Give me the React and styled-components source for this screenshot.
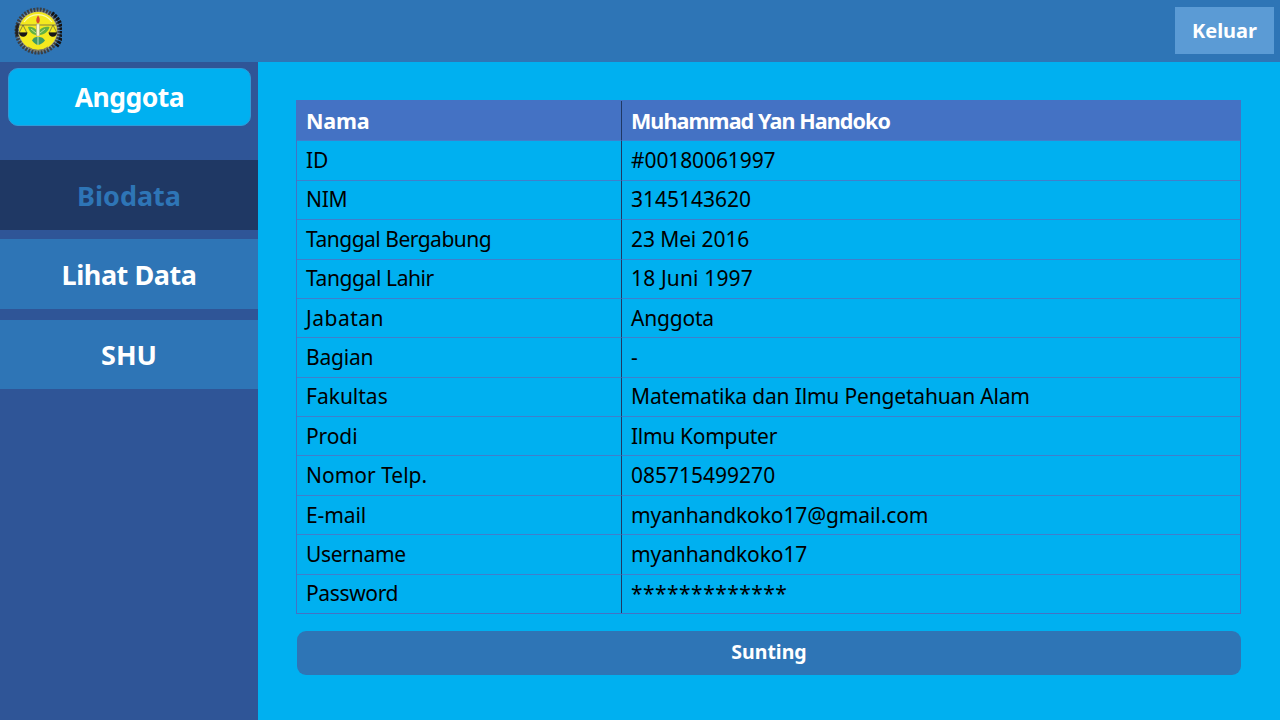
import React from 'react';
import styled, { createGlobalStyle } from 'styled-components';

const GlobalStyle = createGlobalStyle`
  html, body { margin: 0; padding: 0; }
  body { font-family: 'Noto Sans', 'Open Sans', sans-serif; background: #00b0f0; }
`;

const Page = styled.div`
  width: 1280px;
  height: 720px;
  display: flex;
  flex-direction: column;
  overflow: hidden;
`;

const TopBar = styled.header`
  height: 62px;
  flex: none;
  background: #2e75b6;
  display: flex;
  justify-content: space-between;
  align-items: flex-start;
  padding: 7px 6px 0 14px;
  box-sizing: border-box;
`;

const LogoutButton = styled.button`
  width: 99px;
  height: 47px;
  border: none;
  background: #5b9bd5;
  color: #fff;
  font: 700 20px 'Noto Sans', sans-serif;
  padding: 0 0 1px;
`;

const Body = styled.div`
  flex: 1;
  display: flex;
  min-height: 0;
`;

const Sidebar = styled.nav`
  width: 258px;
  flex: none;
  background: #2f5597;
  display: flex;
  flex-direction: column;
  padding-top: 6px;
  box-sizing: border-box;
`;

const RoleBadge = styled.div`
  height: 58px;
  margin: 0 7px 34px 8px;
  border-radius: 10px;
  border: 1px solid #2e9bd8;
  box-sizing: border-box;
  background: #00b0f0;
  color: #fff;
  font-size: 26.5px;
  letter-spacing: -0.5px;
  font-weight: 700;
  display: flex;
  align-items: center;
  justify-content: center;
`;

const NavItem = styled.div`
  height: ${p => p.$h}px;
  margin-bottom: ${p => p.$gap}px;
  background: ${p => (p.$active ? '#1f3864' : '#2e75b6')};
  color: ${p => (p.$active ? '#2e75b6' : '#fff')};
  font-size: 27px;
  letter-spacing: ${p => (p.$tight ? '-0.45px' : '0')};
  font-weight: 700;
  display: flex;
  align-items: center;
  justify-content: center;
`;

const Main = styled.main`
  flex: 1;
  background: #00b0f0;
  padding: 38px 39px 0 38px;
  display: flex;
  flex-direction: column;
`;

const Table = styled.div`
  display: grid;
  grid-template-columns: 324px 1fr;
  grid-template-rows: repeat(13, 1fr);
  height: 514px;
  border: 1px solid #4472c4;
  box-sizing: border-box;
`;

const Cell = styled.div`
  display: flex;
  align-items: center;
  padding: 0 0 1px 9px;
  box-sizing: border-box;
  font-size: ${p => (p.$head ? 21.5 : 21)}px;
  white-space: nowrap;
  color: ${p => (p.$head ? '#fff' : '#000')};
  font-weight: ${p => (p.$head ? 700 : 400)};
  letter-spacing: ${p => p.$track || 0}px;
  background: ${p => (p.$head ? '#4472c4' : 'transparent')};
  border-top: ${p => (p.$head ? 'none' : '1px solid #3f7fcc')};
  border-left: ${p => (p.$right ? '1px solid #1f3864' : 'none')};
`;

const EditButton = styled.button`
  margin: 17px 0 0 1px;
  height: 44px;
  border: none;
  border-radius: 9px;
  background: #2e75b6;
  color: #fff;
  font: 700 19.5px 'Noto Sans', sans-serif;
  padding: 0 0 3px;
`;

// label, label tracking, value, value tracking
const rows = [
  ['ID', 0, '#00180061997', -0.1],
  ['NIM', -0.3, '3145143620', 0],
  ['Tanggal Bergabung', -0.5, '23 Mei 2016', -0.1],
  ['Tanggal Lahir', -0.4, '18 Juni 1997', 0.15],
  ['Jabatan', 0.5, 'Anggota', -0.2],
  ['Bagian', -0.2, '-', 0],
  ['Fakultas', 0, 'Matematika dan Ilmu Pengetahuan Alam', -0.17],
  ['Prodi', -0.1, 'Ilmu Komputer', -0.3],
  ['Nomor Telp.', 0, '085715499270', 0],
  ['E-mail', -0.1, 'myanhandkoko17@gmail.com', -0.1],
  ['Username', -0.3, 'myanhandkoko17', -0.1],
  ['Password', -0.35, '*************', 0.45],
];

const Logo = () => (
  <svg width="48" height="48" viewBox="0 0 48 48">
    <circle cx="24" cy="24" r="21.5" fill="#8a8f8c" />
    <circle cx="24" cy="24" r="21.5" fill="none" stroke="#3c3f42" strokeWidth="4" strokeDasharray="2 1.2" />
    <path d="M38 6a23 23 0 0 1 4 34" fill="none" stroke="#141414" strokeWidth="3.8" strokeDasharray="2.5 1" />
    <path d="M4 17a21 21 0 0 0-1 12" fill="none" stroke="#222" strokeWidth="2.5" />
    <circle cx="24" cy="24" r="19" fill="#f4e91e" />
    <path d="M10 15a17 17 0 0 1 28 0" fill="none" stroke="#fbf8b0" strokeWidth="1.2" />
    <path d="M6 18h36" stroke="#555" strokeWidth="0.7" />
    <path d="M5 26l4-8 4 8zM35 26l4-8 4 8z" fill="none" stroke="#444" strokeWidth="0.6" />
    <path d="M5 25.500a4.200 4.200 0 0 0 8.400 0zM34.600 25.500a4.200 4.200 0 0 0 8.400 0z" fill="#161616" />
    <path d="M22.500 23c-3-3.500-6.500-3.500-8.500-3 1 4 4 8 8.500 8z" fill="#62b043" />
    <path d="M25.500 23c3-3.500 7.500-3.500 10-3-1 4-5 8-10 8z" fill="#62b043" />
    <path d="M17 22l5 4M31 22l-5 4" stroke="#e8f3b0" strokeWidth="0.7" />
    <rect x="22.500" y="17" width="3" height="12" fill="#fbf6c8" stroke="#888" strokeWidth="0.4" />
    <path d="M24 8.500c1.800 2 2.300 4.500 1.400 6.500-.4 1.500-2.400 1.500-2.800 0-.9-2 0-4.500 1.400-6.500z" fill="#d8492c" />
    <path d="M24 30c-2.500-.5-4.500.5-6 3.500 2 2.500 4 4 6 4.500 2.500-.5 5-2 7-4.500-1.500-3-4.500-4-7-3.500z" fill="#3f9a63" />
    <path d="M24 30v8" stroke="#e8f3d0" strokeWidth="0.8" />
    <path d="M14 40a17 17 0 0 0 20 0" fill="none" stroke="#7d7d5a" strokeWidth="1" />
  </svg>
);

export default function App() {
  return (
    <Page>
      <GlobalStyle />
      <TopBar>
        <Logo />
        <LogoutButton>Keluar</LogoutButton>
      </TopBar>
      <Body>
        <Sidebar>
          <RoleBadge>Anggota</RoleBadge>
          <NavItem $active $h={70} $gap={9}>Biodata</NavItem>
          <NavItem $tight $h={70} $gap={11}>Lihat Data</NavItem>
          <NavItem $h={69} $gap={0}>SHU</NavItem>
        </Sidebar>
        <Main>
          <Table>
            <Cell $head $track={-0.2}>Nama</Cell>
            <Cell $head $right $track={-0.9}>Muhammad Yan Handoko</Cell>
            {rows.map(([label, labelTrack, value, valueTrack]) => (
              <React.Fragment key={label}>
                <Cell $track={labelTrack}>{label}</Cell>
                <Cell $right $track={valueTrack}>{value}</Cell>
              </React.Fragment>
            ))}
          </Table>
          <EditButton>Sunting</EditButton>
        </Main>
      </Body>
    </Page>
  );
}
